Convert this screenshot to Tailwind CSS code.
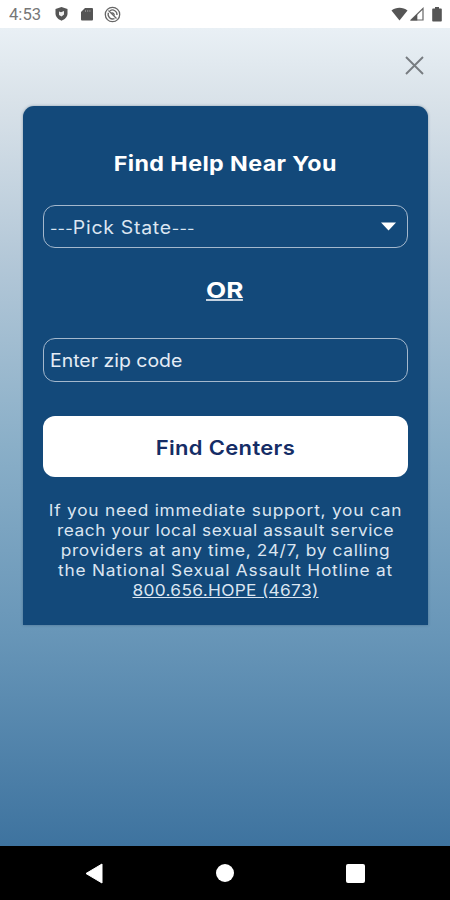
<!DOCTYPE html>
<html lang="en">
<head>
<meta charset="utf-8">
<meta name="viewport" content="width=device-width, initial-scale=1">
<title>Find Help Near You</title>
<script src="https://cdn.jsdelivr.net/npm/@tailwindcss/browser@4"></script>
</head>
<body class="flex h-[900px] w-[450px] flex-col overflow-hidden bg-white font-['Inter',sans-serif]">
  <header class="flex h-7 shrink-0 items-center bg-white pl-[9px] text-[#666]">
    <span class="w-[45px] pt-px font-['Roboto',sans-serif] text-[16px] leading-7 text-[#777]"><span class="inline-block origin-left scale-x-[1.04]">4:53</span></span>
    <svg class="h-4 w-[15px]" viewBox="0 0 15 16"><path d="M7.500 1 13.500 3v4.600c0 3.200-2.500 5.800-6 7.200-3.500-1.400-6-4-6-7.200V3z" fill="#555"/><path d="M5 5.500l2 .8 3-1.300v3.500L7.500 10.500 5 9z" fill="#eee"/></svg>
    <svg class="ml-3 h-[14px] w-3" viewBox="0 0 12 14"><path d="M4 1h7a1 1 0 0 1 1 1v10.500a1 1 0 0 1-1 1H1a1 1 0 0 1-1-1V5z" fill="#555"/><path d="M4.500 3v2M6.700 3v2M8.900 3v2" stroke="#888" stroke-width="1"/></svg>
    <svg class="ml-[11px] h-[17px] w-[17px]" viewBox="0 0 17 17" fill="none" stroke="#666"><circle cx="8.500" cy="8.500" r="7.200" stroke-width="1.300"/><path d="M6 4.700A4.600 4.600 0 0 1 13 9M4.400 6.800A4.600 4.600 0 0 0 10.500 12.600" stroke-width="1.300"/><path d="m4.500 4.500 8 8" stroke-width="1.300"/><path d="M7 6.500c2-1 4 .5 4 3.500z" fill="#666" stroke="none"/></svg>
    <div class="ml-auto flex items-center pr-2">
      <svg class="h-[14px] w-[17px]" viewBox="0 0 17 14"><path d="M.5 3.500C5-.3 12-.3 16.500 3.500L8.500 13.500z" fill="#555"/></svg>
      <svg class="ml-[2px] h-[14px] w-[14px]" viewBox="0 0 14 14"><path d="M13 1.500v11.500H1z" fill="none" stroke="#666" stroke-width="1.200"/><path d="M.5 13.500 7.300 7v6.500z" fill="#555"/></svg>
      <svg class="ml-2 h-[15px] w-[10px]" viewBox="0 0 10 15"><path d="M3 0h4v1.500h2a.8.800 0 0 1 .8.800v11.400a.8.800 0 0 1-.8.800H1a.8.800 0 0 1-.8-.8V2.300a.8.800 0 0 1 .8-.8h2z" fill="#555"/></svg>
    </div>
  </header>

  <main class="flex h-[818px] shrink-0 flex-col bg-[linear-gradient(180deg,#e9f0f5_0%,#d9e2e9_9%,#b4c8d8_28%,#8aafc8_51%,#6896b8_74%,#3e739f_100%)]">
    <div class="flex h-[78px] shrink-0 justify-end pt-[27px] pr-[26px]">
      <button aria-label="Close" class="h-5 w-5"><svg class="h-5 w-5" viewBox="0 0 20 20"><path d="m2 2 17 17M19 2 2 19" stroke="#777c80" stroke-width="1.900"/></svg></button>
    </div>
    <section class="mx-auto flex h-[519px] w-[405px] shrink-0 flex-col rounded-t-[11px] bg-[#13497a] px-5 text-center text-white shadow-[0_0_3px_rgba(30,60,90,0.4)]">
      <h1 class="mt-[43px] h-[30px] text-[20.5px] leading-[30px] font-bold tracking-[0.35px] whitespace-nowrap"><span class="inline-block scale-x-[1.135]">Find Help Near You</span></h1>
      <div class="mt-[26px] flex h-[43px] items-center rounded-[12px] border border-[#a4b8cd] pr-[11px] pl-[6px] text-[#dbe5f1]">
        <span class="inline-block origin-left scale-x-[1.08] pt-[2px] text-[18px] whitespace-nowrap"><span class="text-[15px] tracking-[0.15px]">---</span><span class="tracking-[0.67px]">Pick State</span><span class="text-[15px] tracking-[0.15px]">---</span></span>
        <svg class="ml-auto h-[9px] w-[15px]" viewBox="0 0 15 9"><path d="M0 .5h15L7.500 8.500z" fill="#fff"/></svg>
      </div>
      <div class="mt-[27px] h-[30px] text-[22px] leading-[30px] font-bold"><span class="inline-block h-[26px] scale-x-[1.19] border-b-2 border-[#c5d2e0]">OR</span></div>
      <div class="mt-[33px] flex h-[44px] items-center rounded-[12px] border border-[#a4b8cd] pl-[6px]">
        <span class="inline-block origin-left scale-x-[1.08] pt-px text-[18px] whitespace-nowrap text-[#e4ecf5]">Enter zip code</span>
      </div>
      <button class="mt-[34px] h-[61px] shrink-0 rounded-[12px] bg-white pt-[2px] text-[20px] font-semibold tracking-[0.3px] text-[#152d66]"><span class="inline-block scale-x-[1.1]">Find Centers</span></button>
      <p class="mt-[23px] scale-x-[1.08] text-[16px] leading-5 whitespace-nowrap text-[#dbe5f1]">
        <span class="block tracking-[0.72px]">If you need immediate support, you can</span>
        <span class="block tracking-[0.51px]">reach your local sexual assault service</span>
        <span class="block tracking-[0.6px]">providers at any time, 24/7, by calling</span>
        <span class="block tracking-[0.74px]">the National Sexual Assault Hotline at</span>
        <span class="block tracking-[0.3px] underline">800.656.HOPE (4673)</span>
      </p>
    </section>
  </main>

  <nav class="grid h-[54px] shrink-0 grid-cols-[188px_74px_187px] items-center justify-items-center bg-black">
    <svg class="h-[21px] w-[18px]" viewBox="0 0 18 21"><path d="M1 10.500 17 1v19z" fill="#fff" stroke="#fff" stroke-linejoin="round"/></svg>
    <span class="h-[18px] w-[18px] rounded-full bg-white"></span>
    <span class="h-[19px] w-[19px] rounded-[2px] bg-white"></span>
  </nav>
</body>
</html>
